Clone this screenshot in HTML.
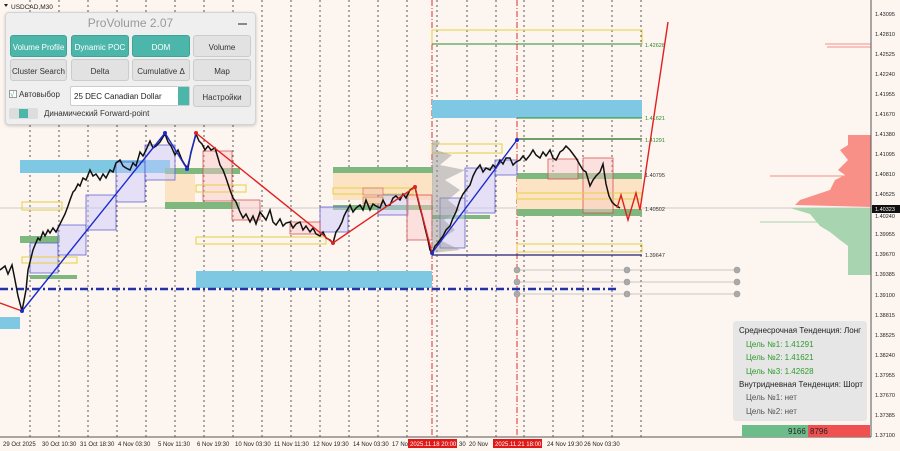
<!DOCTYPE html>
<html><head><meta charset="utf-8"><style>
*{margin:0;padding:0;box-sizing:border-box}
body{width:900px;height:451px;overflow:hidden;background:#fdf5ef;font-family:"Liberation Sans",sans-serif;position:relative}
.pn{position:absolute;left:5px;top:12px;width:251px;height:113px;background:#efefef;border:1px solid #d4d4d4;border-radius:4px;box-shadow:0 1px 3px rgba(0,0,0,.2)}
.b{position:absolute;height:22px;border-radius:3px;font-size:8px;text-align:center;line-height:23px;color:#333;background:#e2e2e2;border:1px solid #ccc}
.t{background:#4db6aa;color:#fff;border-color:#3fa497}
.ib{position:absolute;left:733px;top:321px;width:134px;height:100px;background:#e6e6e6;border-radius:3px;font-size:8px;color:#222}
.ib div{position:absolute;white-space:nowrap}
.g{color:#2e9a2e}.n{color:#555}
</style></head><body>
<svg width="900" height="451" style="position:absolute;left:0;top:0">
<g stroke="#333" stroke-width="0.8" stroke-dasharray="2,3">
<line x1="30" y1="0" x2="30" y2="437"/><line x1="59" y1="0" x2="59" y2="437"/><line x1="88" y1="0" x2="88" y2="437"/><line x1="117" y1="0" x2="117" y2="437"/><line x1="146" y1="0" x2="146" y2="437"/><line x1="175" y1="0" x2="175" y2="437"/><line x1="204" y1="0" x2="204" y2="437"/><line x1="233" y1="0" x2="233" y2="437"/><line x1="262" y1="0" x2="262" y2="437"/><line x1="291" y1="0" x2="291" y2="437"/><line x1="320" y1="0" x2="320" y2="437"/><line x1="349" y1="0" x2="349" y2="437"/><line x1="378" y1="0" x2="378" y2="437"/><line x1="407" y1="0" x2="407" y2="437"/><line x1="437" y1="0" x2="437" y2="437"/><line x1="467" y1="0" x2="467" y2="437"/><line x1="496" y1="0" x2="496" y2="437"/><line x1="524" y1="0" x2="524" y2="437"/><line x1="553" y1="0" x2="553" y2="437"/><line x1="583" y1="0" x2="583" y2="437"/><line x1="612" y1="0" x2="612" y2="437"/><line x1="641" y1="0" x2="641" y2="437"/>
</g>
<g stroke="#e03030" stroke-width="1" stroke-dasharray="6,2,1,2"><line x1="432" y1="0" x2="432" y2="437"/><line x1="517" y1="0" x2="517" y2="437"/></g>
<line x1="0" y1="208" x2="871" y2="208" stroke="#ccc" stroke-width="1"/>
<rect x="20" y="160" width="150" height="13" fill="#7ec8e3"/>
<rect x="196" y="271" width="236" height="17" fill="#7ec8e3"/>
<rect x="432" y="100" width="210" height="18" fill="#7ec8e3"/>
<rect x="0" y="317" width="20" height="12" fill="#7ec8e3"/>
<rect x="165" y="170" width="30" height="35" fill="#fbe3c4"/>
<rect x="333" y="172" width="100" height="28" fill="#fbe3c4"/>
<rect x="517" y="178" width="125" height="33" fill="#fbe3c4"/>
<rect x="165" y="168" width="75" height="6" fill="#7fb87f"/><rect x="165" y="202" width="75" height="7" fill="#7fb87f"/>
<rect x="333" y="167" width="100" height="6" fill="#7fb87f"/><rect x="333" y="205" width="100" height="5" fill="#7fb87f"/>
<rect x="517" y="173" width="125" height="6" fill="#7fb87f"/><rect x="517" y="209" width="125" height="7" fill="#7fb87f"/>
<rect x="20" y="236" width="40" height="7" fill="#7fb87f"/><rect x="30" y="275" width="47" height="4" fill="#7fb87f"/>
<rect x="432" y="215" width="58" height="4" fill="#7fb87f"/>
<g fill="rgba(200,200,255,.45)" stroke="#5555cc" stroke-width=".7">
<rect x="30" y="243" width="28" height="30"/><rect x="58" y="225" width="28" height="30"/><rect x="86" y="195" width="30" height="35"/><rect x="116" y="162" width="29" height="40"/><rect x="145" y="145" width="30" height="35"/><rect x="320" y="207" width="28" height="25"/><rect x="378" y="195" width="30" height="20"/><rect x="440" y="198" width="25" height="50"/><rect x="465" y="168" width="30" height="45"/><rect x="495" y="160" width="22" height="15"/>
</g>
<g fill="rgba(250,200,200,.45)" stroke="#cc4444" stroke-width=".7">
<rect x="203" y="151" width="29" height="50"/><rect x="232" y="200" width="28" height="20"/><rect x="290" y="222" width="30" height="12"/><rect x="407" y="195" width="25" height="45"/><rect x="548" y="159" width="30" height="20"/><rect x="583" y="158" width="30" height="55"/>
</g>
<g fill="none" stroke="#e8d040" stroke-width="1">
<rect x="22" y="202" width="40" height="8"/><rect x="22" y="257" width="55" height="6"/><rect x="196" y="185" width="50" height="7"/><rect x="196" y="237" width="130" height="7"/><rect x="333" y="188" width="80" height="6"/><rect x="432" y="30" width="210" height="14"/><rect x="432" y="144" width="70" height="9"/><rect x="517" y="193" width="125" height="6"/><rect x="517" y="244" width="125" height="8"/>
</g>
<rect x="363" y="188" width="20" height="7" fill="#f4d4b4" stroke="#d86040" stroke-width=".6"/><rect x="363" y="197" width="20" height="7" fill="#f4d4b4" stroke="#d86040" stroke-width=".6"/>
<path d="M432,140 L440,142 L436,150 L452,155 L440,165 L465,170 L445,180 L460,190 L448,200 L460,210 L444,220 L455,230 L440,240 L460,250 L432,253 Z" fill="#9a9a9a" opacity=".5"/>
<line x1="432" y1="44" x2="642" y2="44" stroke="#2a8a2a"/>
<line x1="517" y1="118" x2="642" y2="118" stroke="#2a8a2a"/>
<line x1="517" y1="139" x2="642" y2="139" stroke="#1a6a1a" stroke-width="1.2"/>
<line x1="432" y1="255" x2="642" y2="255" stroke="#222277" stroke-width="1.2"/>
<line x1="0" y1="289" x2="617" y2="289" stroke="#2233aa" stroke-width="2.5" stroke-dasharray="8,3,2,3"/>
<g font-size="5.5" fill="#2a8a2a" font-family="Liberation Sans"><text x="645" y="47">1.42628</text><text x="645" y="120">1.41621</text><text x="645" y="142">1.41291</text><text x="645" y="177" fill="#333">1.40795</text><text x="645" y="211" fill="#333">1.40502</text><text x="645" y="257" fill="#333">1.39647</text></g>
<g stroke="#999" stroke-width=".6" fill="none"><polyline points="517,270 740,270"/><polyline points="517,282 740,282"/><polyline points="517,294 740,294"/><circle cx="517" cy="270" r="3" fill="#aaa"/><circle cx="517" cy="282" r="3" fill="#aaa"/><circle cx="517" cy="294" r="3" fill="#aaa"/><circle cx="627" cy="270" r="3" fill="#aaa"/><circle cx="627" cy="282" r="3" fill="#aaa"/><circle cx="627" cy="294" r="3" fill="#aaa"/><circle cx="737" cy="270" r="3" fill="#aaa"/><circle cx="737" cy="282" r="3" fill="#aaa"/><circle cx="737" cy="294" r="3" fill="#aaa"/></g>
<polyline fill="none" stroke="#111" stroke-width="1.5" points="0,270 5,266 8,274 12,265 15,280 18,296 22,311 26,290 28,270 30,262 33,250 35,245 38,238 40,240 43,232 45,236 48,230 50,233 53,228 56,232 60,224 63,218 65,214 68,206 70,200 73,192 75,190 78,184 80,186 83,178 86,180 90,170 93,176 96,174 100,180 103,174 106,178 110,170 113,172 116,163 120,160 123,166 126,168 130,170 133,163 136,166 140,152 143,156 146,150 150,141 153,148 156,146 160,142 163,137 165,134 168,142 171,146 175,155 178,150 182,160 185,165 188,168 191,152 193,145 196,134 199,141 202,144 205,150 208,146 211,150 215,148 218,158 220,165 223,170 226,178 230,190 233,198 236,202 240,212 243,218 246,214 250,222 253,216 256,224 260,212 263,216 266,220 270,210 273,222 276,225 280,219 283,226 286,223 290,222 293,228 296,224 300,222 303,230 306,226 310,232 313,228 316,234 320,236 323,232 326,238 330,240 333,243 336,232 339,228 342,222 344,216 346,212 350,205 353,212 356,208 360,205 363,210 366,200 370,210 373,204 376,206 380,208 383,200 386,206 390,205 393,198 396,196 400,200 403,194 406,198 410,190 413,188 415,187 418,200 420,208 422,215 425,228 428,240 430,250 432,253 435,246 437,244 440,240 443,236 446,230 450,226 453,218 456,212 460,200 463,194 466,190 470,185 473,176 476,170 480,165 483,172 486,168 490,170 493,165 496,168 500,160 503,164 506,158 510,158 513,165 516,162 520,160 523,156 526,160 530,155 533,150 536,155 540,158 543,152 546,156 550,150 553,158 556,160 560,152 563,150 566,146 570,150 573,154 576,158 580,165 583,170 586,172 590,186 593,180 596,176 600,172 603,164 606,184 609,196 612,202 615,205 620,208"/>
<polyline fill="none" stroke="#1a2acc" stroke-width="1.4" points="22,311 165,133 187,169 196,133"/>
<polyline fill="none" stroke="#1a2acc" stroke-width="1.4" points="432,253 517,140"/>
<polyline fill="none" stroke="#e02020" stroke-width="1.4" points="196,133 333,243 415,187 432,253"/>
<polyline fill="none" stroke="#e02020" stroke-width="1.4" points="0,303 22,311"/>
<polyline fill="none" stroke="#e02020" stroke-width="1.4" points="617,208 621,195 628,220 636,193 640,210 668,22"/>
<g fill="#1a2acc"><circle cx="22" cy="311" r="2"/><circle cx="165" cy="133" r="2"/><circle cx="187" cy="169" r="2"/><circle cx="432" cy="253" r="2"/><circle cx="517" cy="140" r="2"/></g>
<g fill="#e02020"><circle cx="196" cy="133" r="2"/><circle cx="333" cy="243" r="2"/><circle cx="415" cy="187" r="2"/></g>
<path d="M871,135 L848,135 L848,145 L840,150 L848,160 L838,170 L845,175 L835,180 L830,190 L815,195 L800,200 L795,205 L871,207Z" fill="#f89088"/>
<line x1="770" y1="176" x2="871" y2="176" stroke="#f89088"/>
<line x1="825" y1="44" x2="871" y2="44" stroke="#f89088"/><line x1="827" y1="47" x2="871" y2="47" stroke="#f89088"/>
<path d="M871,208 L790,208 L810,214 L815,220 L820,226 L830,232 L840,240 L848,246 L848,275 L871,275Z" fill="#a8d4b0"/>
<line x1="760" y1="222" x2="871" y2="222" stroke="#a8d4b0"/>
<line x1="871" y1="0" x2="871" y2="437" stroke="#555"/>
<line x1="0" y1="437" x2="871" y2="437" stroke="#555"/>
<rect x="742" y="425" width="66" height="12" fill="#6dbd8a"/><rect x="808" y="425" width="62" height="12" fill="#f05050"/>
<text x="788" y="434" font-size="8" fill="#222" font-family="Liberation Sans">9166</text><text x="810" y="434" font-size="8" fill="#222" font-family="Liberation Sans">8796</text>
<g font-size="5.5" fill="#222" font-family="Liberation Sans">
<text x="875" y="16">1.43095</text><text x="875" y="36">1.42810</text><text x="875" y="56">1.42525</text><text x="875" y="76">1.42240</text><text x="875" y="96">1.41955</text><text x="875" y="116">1.41670</text><text x="875" y="136">1.41380</text><text x="875" y="156">1.41095</text><text x="875" y="176">1.40810</text><text x="875" y="196">1.40525</text><text x="875" y="218">1.40240</text><text x="875" y="236">1.39955</text><text x="875" y="256">1.39670</text><text x="875" y="276">1.39385</text><text x="875" y="297">1.39100</text><text x="875" y="317">1.38815</text><text x="875" y="337">1.38525</text><text x="875" y="357">1.38240</text><text x="875" y="377">1.37955</text><text x="875" y="397">1.37670</text><text x="875" y="417">1.37385</text><text x="875" y="437">1.37100</text>
</g>
<rect x="872" y="205" width="28" height="8" fill="#111"/><text x="875" y="211" font-size="5.5" fill="#fff" font-family="Liberation Sans">1.40323</text>
<g font-size="6" fill="#222" font-family="Liberation Sans">
<text x="3" y="446">29 Oct 2025</text><text x="42" y="446">30 Oct 10:30</text><text x="80" y="446">31 Oct 18:30</text><text x="118" y="446">4 Nov 03:30</text><text x="158" y="446">5 Nov 11:30</text><text x="197" y="446">6 Nov 19:30</text><text x="235" y="446">10 Nov 03:30</text><text x="274" y="446">11 Nov 11:30</text><text x="313" y="446">12 Nov 19:30</text><text x="353" y="446">14 Nov 03:30</text><text x="392" y="446">17 No</text><text x="459" y="446">30</text><text x="469" y="446">20 Nov</text><text x="547" y="446">24 Nov 19:30</text><text x="584" y="446">26 Nov 03:30</text>
</g>
<rect x="408" y="439" width="49" height="9" fill="#e01818"/><text x="410" y="446" font-size="6" fill="#fff" font-family="Liberation Sans">2025.11.18 20:00</text>
<rect x="493" y="439" width="49" height="9" fill="#e01818"/><text x="495" y="446" font-size="6" fill="#fff" font-family="Liberation Sans">2025.11.21 18:00</text>
<path d="M4,4 L8,4 L6,7Z" fill="#222"/><text x="11" y="9" font-size="6.5" fill="#222" font-family="Liberation Sans">USDCAD,M30</text>
</svg>
<div class="pn">
<div style="position:absolute;left:0;top:3px;width:100%;text-align:center;font-size:12px;color:#999">ProVolume 2.07</div>
<div style="position:absolute;right:8px;top:10px;width:9px;height:1.5px;background:#888"></div>
<div class="b t" style="left:4px;top:22px;width:57px">Volume Profile</div>
<div class="b t" style="left:65px;top:22px;width:58px">Dynamic POC</div>
<div class="b t" style="left:126px;top:22px;width:58px">DOM</div>
<div class="b" style="left:187px;top:22px;width:58px">Volume</div>
<div class="b" style="left:4px;top:46px;width:57px">Cluster Search</div>
<div class="b" style="left:65px;top:46px;width:58px">Delta</div>
<div class="b" style="left:126px;top:46px;width:58px">Cumulative Δ</div>
<div class="b" style="left:187px;top:46px;width:58px">Map</div>
<div style="position:absolute;left:3px;top:77px;width:8px;height:8px;border:1px solid #999;background:#fff;font-size:8px;line-height:7px;color:#4db6aa">√</div>
<div style="position:absolute;left:13px;top:77px;font-size:8px;color:#333">Автовыбор</div>
<div style="position:absolute;left:64px;top:73px;width:120px;height:20px;background:#fff;border:1px solid #ccc;border-radius:2px;font-size:8px;line-height:19px;padding-left:3px;color:#222">25 DEC Canadian Dollar<div style="position:absolute;right:0;top:0;width:11px;height:18px;background:#4db6aa"></div></div>
<div class="b" style="left:187px;top:72px;width:58px">Настройки</div>
<div style="position:absolute;left:3px;top:95px;width:29px;height:11px;background:#ddd;border-radius:2px"><div style="position:absolute;left:10px;top:1px;width:9px;height:9px;background:#4db6aa"></div></div>
<div style="position:absolute;left:38px;top:96px;font-size:8px;color:#333">Динамический Forward-point</div>
</div>
<div class="ib">
<div style="left:6px;top:5px">Среднесрочная Тенденция: Лонг</div>
<div class="g" style="left:13px;top:19px">Цель №1: 1.41291</div>
<div class="g" style="left:13px;top:32px">Цель №2: 1.41621</div>
<div class="g" style="left:13px;top:46px">Цель №3: 1.42628</div>
<div style="left:6px;top:59px">Внутридневная Тенденция: Шорт</div>
<div class="n" style="left:13px;top:72px">Цель №1: нет</div>
<div class="n" style="left:13px;top:86px">Цель №2: нет</div>
</div>
</body></html>
